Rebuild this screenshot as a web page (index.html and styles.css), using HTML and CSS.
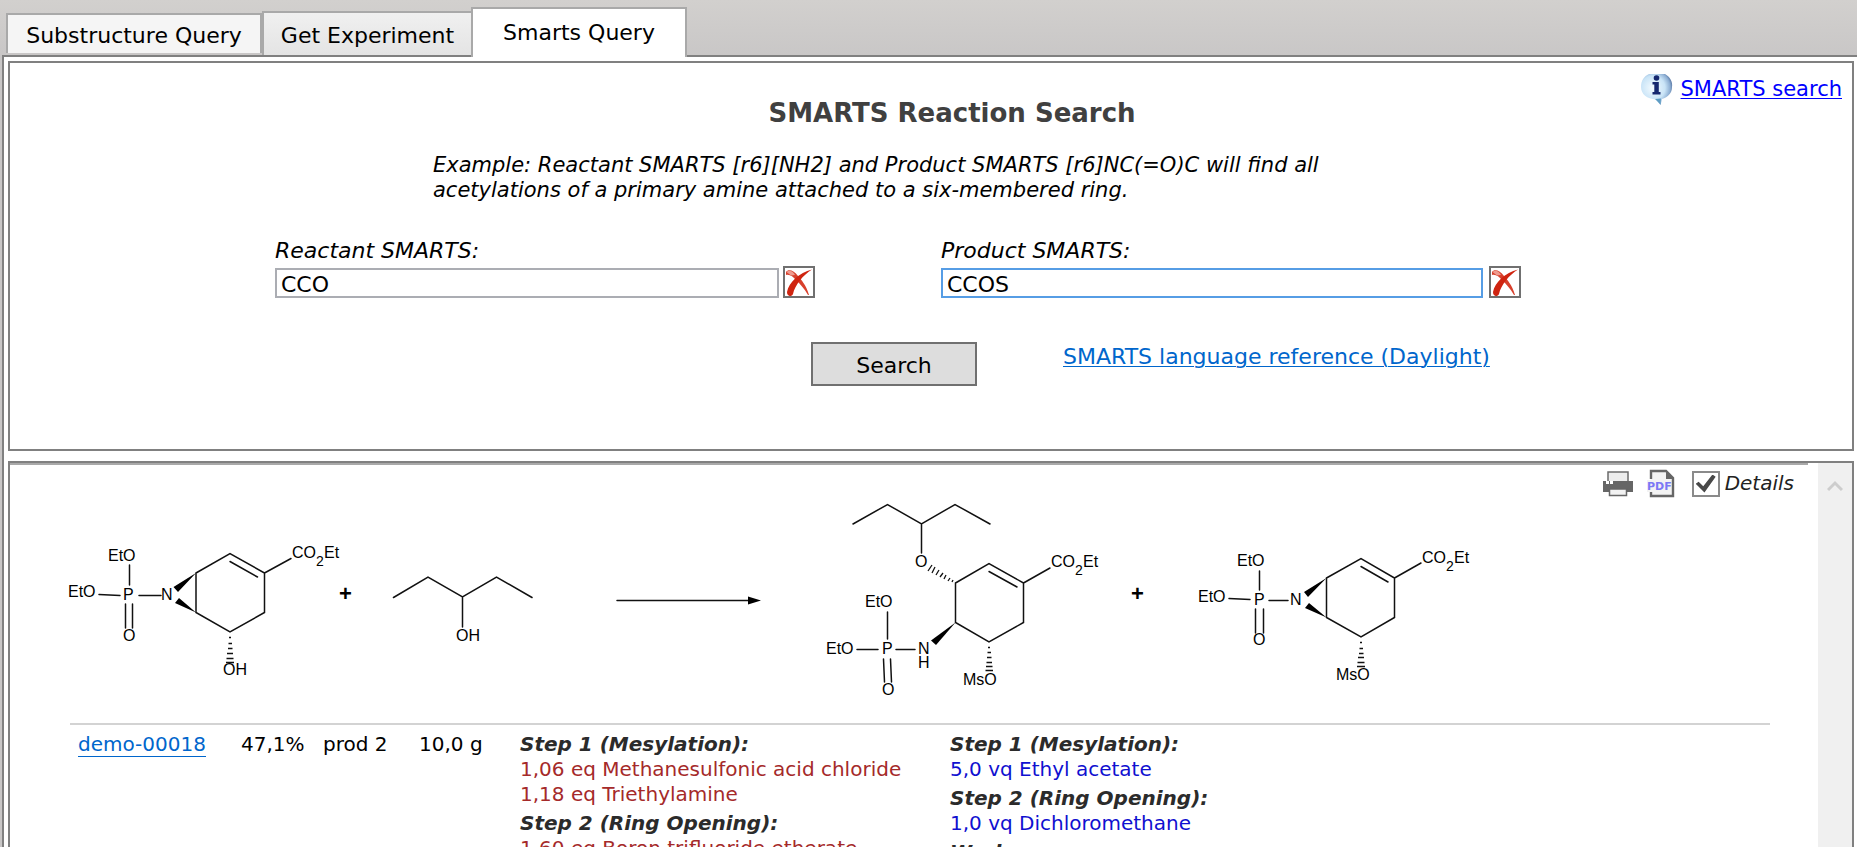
FILE: index.html
```html
<!DOCTYPE html>
<html lang="en">
<head>
<meta charset="utf-8">
<title>SMARTS Reaction Search</title>
<link rel="stylesheet" href="styles.css">
</head>
<body>
<div class="app">
  <nav class="tabs" role="tablist">
    <button class="tab tab-first" role="tab">Substructure Query</button>
    <button class="tab tab-middle" role="tab">Get Experiment</button>
    <button class="tab tab-active" role="tab" aria-selected="true">Smarts Query</button>
  </nav>
  <main class="page">
    <section class="panel query">
      <a class="help" href="#help">
        <svg width="32" height="32" viewBox="0 0 32 32" aria-hidden="true">
          <defs>
            <radialGradient id="bubble" cx="0.38" cy="0.45" r="0.65">
              <stop offset="0" stop-color="#f4fbff"/><stop offset="0.6" stop-color="#c9e4f7"/><stop offset="0.85" stop-color="#8fb0d4"/><stop offset="1" stop-color="#506e9c"/>
            </radialGradient>
          </defs>
          <path d="M8 1 H24 C29 4 32 9 31 14 C31 20 27 24 21 26 L19.500 32 L15 26.500 C6 26 0 21 0 14 C0 8 3 3 8 1Z" fill="url(#bubble)"/>
          <path d="M14 26 L20 25.500 L19.500 31.500Z" fill="#5f9dc4"/>
          <circle cx="15.500" cy="5" r="2.800" fill="#16286f"/>
          <path d="M11.500 9 H17.800 V19 H19.500 V21.500 H11.500 V19 H13.300 V11.500 H11.500Z" fill="#16286f"/>
        </svg>
        <span>SMARTS search</span>
      </a>
      <h1 class="title">SMARTS Reaction Search</h1>
      <p class="example">Example: Reactant SMARTS [r6][NH2] and Product SMARTS [r6]NC(=O)C will find all acetylations of a primary amine attached to a six-membered ring.</p>
      <form class="form" onsubmit="return false">
        <div class="field field-reactant">
          <label for="reactant">Reactant SMARTS:</label>
          <div class="entry">
            <input id="reactant" type="text" value="CCO">
            <button class="clear" type="button" aria-label="Clear reactant">
              <svg width="28" height="28" viewBox="0 0 28 28"><path d="M1 4 C3 1 9 2 13 8 C16 12 21 16 24 27 L23 27 C19 20 15 16 11 12 C8 9 5 6 1 7Z" fill="#d8402c"/><path d="M27 1.500 C18 7 10 17 8 26 C7 29 2 29 2 24 C4 14 14 5 27 1.500Z" fill="#cf2410"/><path d="M1.500 4 C4 1.500 8 3 10 7 L6 7.500 Z" fill="#ee9b8f"/></svg>
            </button>
          </div>
        </div>
        <div class="field field-product">
          <label for="product">Product SMARTS:</label>
          <div class="entry">
            <input id="product" class="focused" type="text" value="CCOS">
            <button class="clear" type="button" aria-label="Clear product">
              <svg width="28" height="28" viewBox="0 0 28 28"><path d="M1 4 C3 1 9 2 13 8 C16 12 21 16 24 27 L23 27 C19 20 15 16 11 12 C8 9 5 6 1 7Z" fill="#d8402c"/><path d="M27 1.500 C18 7 10 17 8 26 C7 29 2 29 2 24 C4 14 14 5 27 1.500Z" fill="#cf2410"/><path d="M1.500 4 C4 1.500 8 3 10 7 L6 7.500 Z" fill="#ee9b8f"/></svg>
            </button>
          </div>
        </div>
        <div class="actions">
          <button class="search" type="submit">Search</button>
          <a class="reference" href="#daylight">SMARTS language reference (Daylight)</a>
        </div>
      </form>
    </section>

    <section class="panel results">
      <div class="list">
        <div class="toolbar">
          <button class="tool" type="button" aria-label="Print">
            <svg width="30" height="26" viewBox="0 0 30 26"><path d="M5 10 V1 H25 V10" fill="#ececec" stroke="#6b6b6b" stroke-width="1.500"/><path d="M0 10 H30 V21 H0Z" fill="#666"/><path d="M3 10 h3 v3 h-3z M7 10 h3 v3 h-3z" fill="#fff"/><path d="M6.500 18 H23.500 V24.500 H6.500Z" fill="#f2f2f2" stroke="#666" stroke-width="1.500"/></svg>
          </button>
          <button class="tool" type="button" aria-label="Save as PDF">
            <svg width="30" height="30" viewBox="0 0 30 30"><path d="M5 10 V2 H20 L27 9 V27 H5 V23" fill="#f3f3f3" stroke="#666" stroke-width="2.400"/><path d="M20 1 L28 10 H20Z" fill="#666"/><path d="M1 11 H24 V23 H1Z" fill="#f3f3f3"/><text class="pdf" x="1" y="21">PDF</text></svg>
          </button>
          <label class="details"><input type="checkbox" checked> <span>Details</span></label>
        </div>

        <svg class="reaction" width="1420" height="200" viewBox="60 500 1420 200" role="img" aria-label="Reaction scheme">
          <g class="molecule">
            <path class="bond" d="M99 594.500L120 595.500M129.500 565V585M125.500 604V628M132.500 604V628M139 595.500H161M196 573L230 553.500L264.500 573V612.500L230 632L196 612.500ZM230 561.500L257.500 577M264.500 573L291 558.500"/>
            <path d="M196 573L173.500 587L178 592ZM196 612.500L179 598L175 603Z"/>
            <path class="hash" d="M229 637.500H231M228.500 643.500H232M228 648.500H232.500M227 653.500H233M226.500 658.500H233.500M226 662.500H234"/>
            <text x="108" y="561">EtO</text><text x="68" y="597">EtO</text><text x="123" y="600">P</text><text x="123" y="641">O</text><text x="161" y="600">N</text>
            <text x="292" y="558">CO</text><text class="sub" x="316" y="566">2</text><text x="324" y="558">Et</text>
            <text x="223" y="675">OH</text>
          </g>
          <text class="plus" x="339" y="601">+</text>
          <g class="molecule">
            <path class="bond" d="M393.500 597.500L428 577L462.500 597L496.500 577L532 597.500M462.500 597V627"/>
            <text x="456" y="641">OH</text>
          </g>
          <path class="bond" d="M617 600.500H750"/>
          <path d="M748 596.500L761 600.500L748 604.500Z"/>
          <g class="molecule">
            <path class="bond" d="M853 524L887.500 504.500L921.500 524L955 504.500L990 524M921.500 524V553M955.500 583L989 563.500L1023.500 583V622.500L989 642L955.500 622.500ZM989 571.500L1017 587M1023.500 583L1050 568M896 649.500H915M857 649.500H878M887.500 612V639M883.500 659L884.500 682M890.500 659L891.500 682"/>
            <path d="M955.500 622.500L931 640.500L936 645Z"/>
            <path class="hash" d="M932 565L928 571M935 567L932 573M939 570L936 575M943 573L940 577M946 575L944 579M950 578L948 581M953 580L952 582M988 647.500H990M987.500 652.500H991M987 657.500H991.500M986.500 662.500H992M986 666.500H992.500M985.500 670.500H993"/>
            <text x="915" y="567">O</text><text x="1051" y="567">CO</text><text class="sub" x="1075" y="575">2</text><text x="1083" y="567">Et</text>
            <text x="865" y="607">EtO</text><text x="826" y="654">EtO</text><text x="882" y="654">P</text><text x="918" y="654">N</text><text x="918" y="668">H</text><text x="882" y="695">O</text><text x="963" y="685">MsO</text>
          </g>
          <text class="plus" x="1131" y="601">+</text>
          <g class="molecule">
            <path class="bond" d="M1229 598.500L1250 599.500M1259.500 571V590M1255.500 609V633M1263.500 609V633M1269 600.500H1288M1326.500 578L1361 558.500L1394.500 578V617.500L1361 637L1326.500 617.500ZM1361 566.500L1388 582M1394.500 578L1421 563"/>
            <path d="M1326.500 578L1304 592L1308 597ZM1326.500 617.500L1309 603L1305 608Z"/>
            <path class="hash" d="M1360 642.500H1362M1359.500 648.500H1363M1359 653.500H1363.500M1358 657.500H1364M1357.500 662.500H1364.500M1357 666.500H1365"/>
            <text x="1237" y="566">EtO</text><text x="1198" y="602">EtO</text><text x="1254" y="605">P</text><text x="1253" y="645">O</text><text x="1290" y="605">N</text>
            <text x="1422" y="563">CO</text><text class="sub" x="1446" y="571">2</text><text x="1454" y="563">Et</text>
            <text x="1336" y="680">MsO</text>
          </g>
        </svg>

        <table class="experiments">
          <colgroup><col class="c-id"><col class="c-yield"><col class="c-prod"><col class="c-mass"><col class="c-reagents"><col></colgroup>
          <tr>
            <td><a class="exp-link" href="#demo-00018">demo-00018</a></td>
            <td>47,1%</td>
            <td>prod 2</td>
            <td>10,0 g</td>
            <td>
              <div class="step">Step 1 (Mesylation):</div>
              <div class="reagent">1,06 eq Methanesulfonic acid chloride</div>
              <div class="reagent">1,18 eq Triethylamine</div>
              <div class="step">Step 2 (Ring Opening):</div>
              <div class="reagent">1,60 eq Boron trifluoride etherate</div>
            </td>
            <td>
              <div class="step">Step 1 (Mesylation):</div>
              <div class="solvent">5,0 vq Ethyl acetate</div>
              <div class="step">Step 2 (Ring Opening):</div>
              <div class="solvent">1,0 vq Dichloromethane</div>
              <div class="step">Workup:</div>
            </td>
          </tr>
        </table>
      </div>
      <div class="scrollbar" aria-hidden="true">
        <svg width="16" height="12" viewBox="0 0 16 12"><path d="M1 10L8 3L15 10" fill="none" stroke="#cdcdcd" stroke-width="3"/></svg>
      </div>
    </section>
  </main>
</div>
</body>
</html>
```

FILE: styles.css
```css
* { box-sizing: border-box; }
body {
  margin: 0;
  font: 22px/25px "DejaVu Sans", sans-serif;
  color: #000;
  background: #fff;
}
button, input { font: inherit; color: inherit; }
button { cursor: pointer; }

.app {
  display: flex;
  flex-direction: column;
  height: 100vh;
  overflow: hidden;
  padding-left: 2px;
  background: linear-gradient(#d2d0ce, #c8c6c6 60px);
}

/* Tabs */
.tabs {
  display: flex;
  align-items: flex-end;
  height: 57px;
  margin-bottom: -2px;
  padding-left: 4px;
  position: relative;
}
.tab {
  border: 2px solid #a9a9a9;
  border-bottom: 0;
  padding: 2px 0 0;
}
.tab-first { width: 256px; height: 40px; margin-bottom: 4px; background: #f5f5f5; }
.tab-middle { width: 209px; height: 44px; margin-bottom: 2px; background: linear-gradient(#f0f0f0, #e4e4e4); border-right: 0; }
.tab-active { width: 216px; height: 50px; padding-bottom: 4px; background: #fff; }

.page {
  flex: 1;
  min-height: 0;
  display: flex;
  flex-direction: column;
  gap: 10px;
  padding: 4px 3px 0 4px;
  border: 2px solid #808080;
  border-width: 2px 0 0 2px;
  background: #fff;
}
.panel { border: 2px solid #808080; background: #fff; }

/* Query panel */
.query { position: relative; flex: none; padding: 34px 0 63px; }
.help {
  position: absolute;
  top: 10px;
  right: 10px;
  display: flex;
  align-items: center;
  gap: 8px;
  font-size: 21px;
  color: #00f;
}
a { text-underline-offset: 2px; text-decoration-thickness: 1px; }
.title {
  margin: 0 0 24px;
  padding-left: 42px;
  text-align: center;
  font-size: 26px;
  line-height: 32px;
  color: #404040;
}
.example { width: 960px; margin: 0 0 35px 423px; font-size: 21px; font-style: italic; }
.form {
  display: grid;
  grid-template-columns: 540fr 580fr;
  column-gap: 126px;
  width: 1246px;
  margin-left: 265px;
}
.field label { display: block; font-style: italic; margin-bottom: 3px; }
.entry { display: flex; align-items: flex-end; gap: 4px; }
.field-product .entry { gap: 6px; }
.entry input {
  flex: 1;
  min-width: 0;
  height: 30px;
  padding: 2px 4px 0;
  border: 2px solid #abadb3;
  background: #fff;
}
.entry input.focused { border-color: #569de5; }
.clear {
  display: flex;
  width: 32px;
  height: 32px;
  padding: 0;
  border: 2px solid #707070;
  background: #fff;
}
.actions {
  grid-column: 1 / -1;
  display: flex;
  gap: 86px;
  margin: 44px 0 0 536px;
}
.search {
  width: 166px;
  height: 44px;
  padding: 2px 0 0;
  border: 2px solid #707070;
  background: #ddd;
}
.reference { color: #0066cc; padding-top: 2px; }

/* Results panel */
.results { flex: 1; min-height: 0; display: flex; border-bottom: 0; overflow: hidden; font-size: 20px; }
.list { flex: 1; min-width: 0; padding-right: 10px; overflow: hidden; }
.toolbar {
  display: flex;
  justify-content: flex-end;
  align-items: center;
  gap: 13px;
  height: 37px;
  padding: 2px 14px 0 0;
  border-top: 2px solid #a9a9a9;
}
.tool { display: flex; padding: 0; border: 0; background: none; }
.pdf { font: bold 11px "DejaVu Sans", sans-serif; fill: #7b78f5; }
.details { display: flex; align-items: center; gap: 5px; margin-left: 3px; font-style: italic; color: #222; }
.details input {
  appearance: none;
  width: 28px;
  height: 26px;
  margin: 0;
  border: 2px solid #8a8a8a;
  display: grid;
  place-items: center;
}
.details input:checked::before {
  content: "";
  width: 20px;
  height: 18px;
  background: #484848;
  clip-path: polygon(0 52%, 15% 40%, 38% 65%, 84% 0, 100% 12%, 44% 100%);
}
.reaction { display: block; margin-left: 50px; font: 16px "Liberation Sans", sans-serif; }
.bond { fill: none; stroke: #111; stroke-width: 1.5; stroke-linecap: round; }
.hash { fill: none; stroke: #111; stroke-width: 1.3; }
.sub { font-size: 14px; }
.plus { font-size: 22px; font-weight: bold; }

.experiments {
  table-layout: fixed;
  width: calc(100% - 98px);
  margin: 23px 0 0 60px;
  border-collapse: collapse;
  border-top: 2px solid #d3d3d3;
}
.experiments td { padding: 7px 0 0 8px; vertical-align: top; white-space: nowrap; }
.c-id { width: 163px; }
.c-yield { width: 82px; }
.c-prod { width: 96px; }
.c-mass { width: 101px; }
.c-reagents { width: 430px; }
.exp-link { color: #0066cc; text-decoration: none; border-bottom: 1px solid #0066cc; }
.step { font-weight: bold; font-style: italic; color: #2b2b2b; }
.reagent + .step, .solvent + .step { margin-top: 4px; }
.reagent { color: #a52a2a; }
.solvent { color: #1010d0; }
.scrollbar { width: 34px; padding: 10px 0 0 9px; background: #f0f0f0; }
```
